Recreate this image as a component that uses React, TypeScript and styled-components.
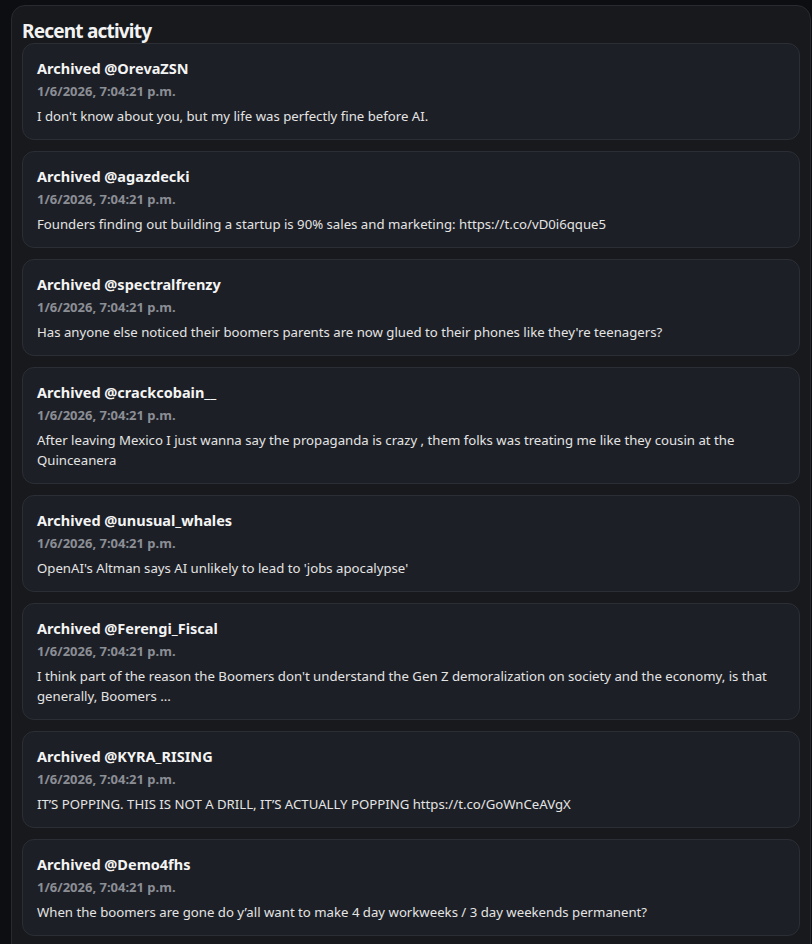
import * as React from "react";
import styled, { createGlobalStyle } from "styled-components";

const GlobalStyle = createGlobalStyle`
  html, body {
    margin: 0;
    background: #0d0e11;
    font-family: "Noto Sans", "Open Sans", sans-serif;
    color: #ececec;
  }
`;

const Page = styled.div`
  padding: 5px 0 0 11px;
  height: 944px;
  box-sizing: border-box;
  overflow: hidden;
`;

const Panel = styled.section`
  width: 800px;
  box-sizing: border-box;
  background: #17191d;
  border: 1px solid #272a30;
  border-radius: 14px;
  padding: 13px 10px 20px 10px;
`;

const Title = styled.h2`
  margin: 0;
  font-size: 19px;
  line-height: 24px;
  font-weight: 700;
  color: #f2f2f2;
  letter-spacing: -0.8px;
`;

const List = styled.div`
  display: flex;
  flex-direction: column;
  gap: 11px;
`;

const Card = styled.article`
  background: #1d1f26;
  border: 1px solid #2b2e35;
  border-radius: 12px;
  padding: 14px 14px 13px 14px;
`;

const Who = styled.div`
  font-size: 14.5px;
  line-height: 20px;
  font-weight: 700;
  color: #f4f4f4;
`;

const When = styled.div`
  margin-top: 4px;
  font-size: 13px;
  line-height: 18px;
  font-weight: 700;
  color: #8b8e95;
`;

const Text = styled.div`
  margin-top: 6px;
  font-size: 13.2px;
  line-height: 20px;
  color: #e4e4e4;
`;

type Item = { handle: string; text: string };

const items: Item[] = [
  { handle: "OrevaZSN", text: "I don't know about you, but my life was perfectly fine before AI." },
  { handle: "agazdecki", text: "Founders finding out building a startup is 90% sales and marketing: https://t.co/vD0i6qque5" },
  { handle: "spectralfrenzy", text: "Has anyone else noticed their boomers parents are now glued to their phones like they're teenagers?" },
  {
    handle: "crackcobain__",
    text: "After leaving Mexico I just wanna say the propaganda is crazy , them folks was treating me like they cousin at the Quinceanera",
  },
  { handle: "unusual_whales", text: "OpenAI's Altman says AI unlikely to lead to 'jobs apocalypse'" },
  {
    handle: "Ferengi_Fiscal",
    text: "I think part of the reason the Boomers don't understand the Gen Z demoralization on society and the economy, is that generally, Boomers ...",
  },
  { handle: "KYRA_RISING", text: "IT’S POPPING. THIS IS NOT A DRILL, IT’S ACTUALLY POPPING https://t.co/GoWnCeAVgX" },
  { handle: "Demo4fhs", text: "When the boomers are gone do y’all want to make 4 day workweeks / 3 day weekends permanent?" },
];

export default function App() {
  return (
    <Page>
      <GlobalStyle />
      <Panel>
        <Title>Recent activity</Title>
        <List>
          {items.map((it) => (
            <Card key={it.handle}>
              <Who>Archived @{it.handle}</Who>
              <When>1/6/2026, 7:04:21 p.m.</When>
              <Text>{it.text}</Text>
            </Card>
          ))}
        </List>
      </Panel>
    </Page>
  );
}
